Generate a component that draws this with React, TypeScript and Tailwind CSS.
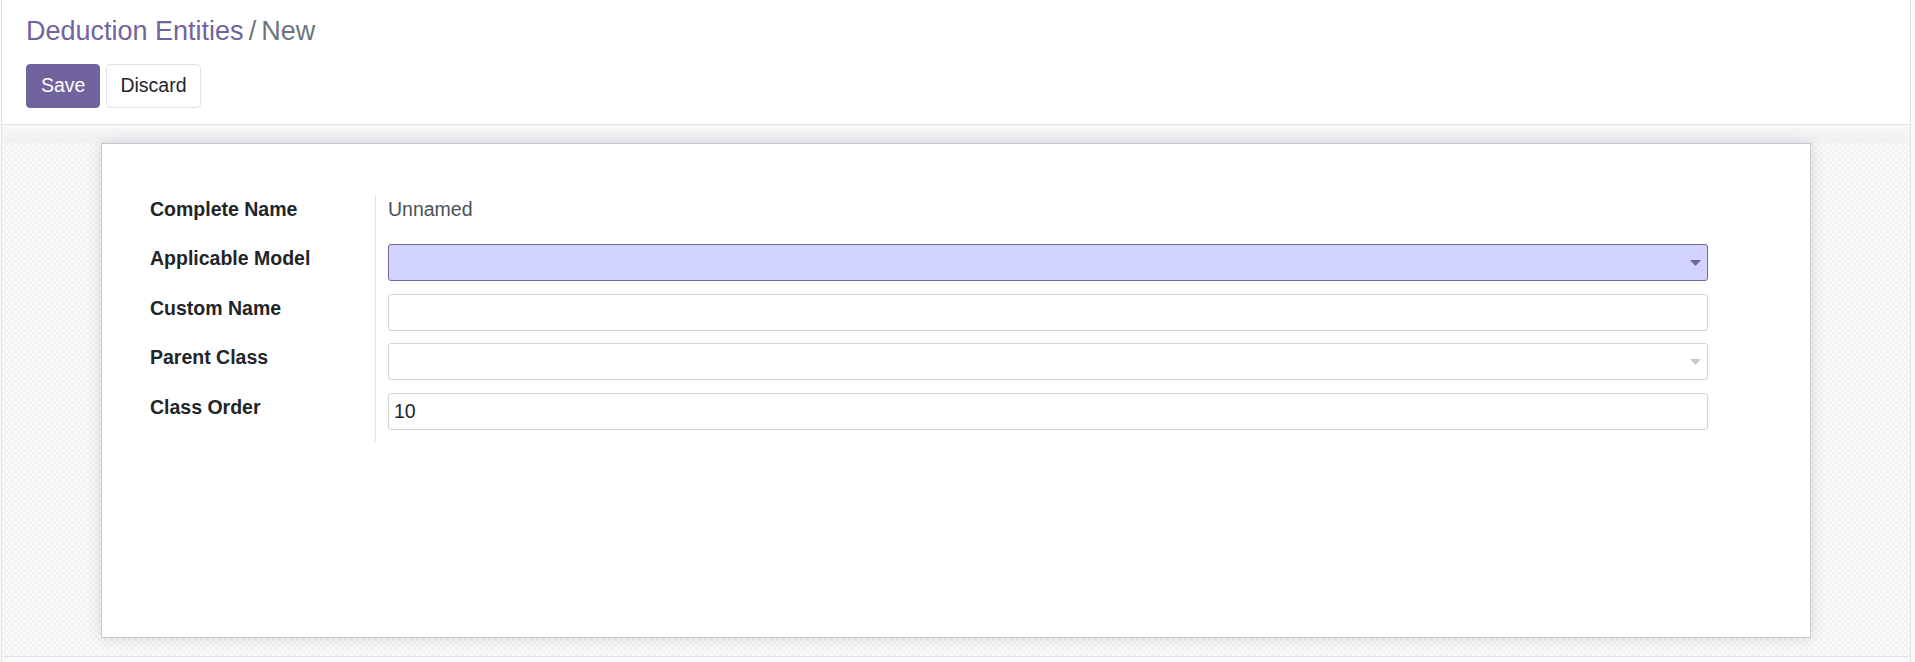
import React from 'react';

type Field = {
  label: string;
  kind: 'text' | 'input' | 'select';
  value?: string;
  required?: boolean;
  height: string;
};

const fields: Field[] = [
  { label: 'Complete Name', kind: 'text', value: 'Unnamed', height: 'h-[49px]' },
  { label: 'Applicable Model', kind: 'select', required: true, height: 'h-[50px]' },
  { label: 'Custom Name', kind: 'input', height: 'h-[49px]' },
  { label: 'Parent Class', kind: 'select', height: 'h-[50px]' },
  { label: 'Class Order', kind: 'input', value: '10', height: 'h-[49px]' },
];

function Caret({ color }: { color: string }) {
  return (
    <svg width="11" height="6" viewBox="0 0 11 6" className="absolute right-[6px] top-[15px]">
      <polygon points="0,0 11,0 5.5,6" fill={color} />
    </svg>
  );
}

function FieldValue({ f }: { f: Field }) {
  if (f.kind === 'text') {
    return <span className="text-[#495057]">{f.value}</span>;
  }
  return (
    <div
      className={
        f.required
          ? 'relative flex h-[37px] w-[1320px] items-center rounded-[3px] border border-[#7467a0] bg-[#d2d2ff] px-[5px]'
          : 'relative flex h-[37px] w-[1320px] items-center rounded-[3px] border border-[#d4d4d4] bg-white px-[5px]'
      }
    >
      <span className="text-[#212529]">{f.value}</span>
      {f.kind === 'select' && <Caret color={f.required ? '#71639e' : '#c9c9c9'} />}
    </div>
  );
}

export default function App() {
  return (
    <div className="h-[662px] w-[1915px] overflow-hidden bg-[#f8f9fa] font-['Liberation_Sans',Arial,sans-serif]">
      <div className="ml-[1px] flex h-full w-[1910px] flex-col border-x border-[#e3e3e3] bg-white">
        {/* control panel */}
        <header className="border-b border-[#dee2e6] bg-white px-[24px] pb-[16px] pt-[13px]">
          <h1 className="flex text-[27px] leading-[36px]">
            <span className="text-[#71639e]">Deduction Entities</span>
            <span className="mx-[5px] text-[#6c757d]">/</span>
            <span className="text-[#6c757d]">New</span>
          </h1>
          <div className="mt-[15px] flex gap-[6px]">
            <button className="flex h-[44px] items-center rounded-[4px] border border-[#71639e] bg-[#71639e] px-[14px] text-[19.5px] text-white">
              Save
            </button>
            <button className="flex h-[44px] items-center rounded-[4px] border border-[#dee2e6] bg-white px-[13px] text-[19.5px] text-[#212529]">
              Discard
            </button>
          </div>
        </header>

        {/* empty status bar */}
        <div className="h-[18px] bg-linear-to-b from-[#f7f8f9] to-[#eff0f2]" />

        {/* sheet background */}
        <div className="h-[513px] bg-[repeating-conic-gradient(#f1f1f1_0_25%,#fbfbfb_0_50%)] bg-[length:6px_6px]">
          <div className="mx-auto h-[495px] w-[1710px] border border-[#c8c9d0] bg-white pl-[48px] pt-[51px] shadow-[0_0_14px_rgba(0,0,0,0.13)]">
            <div className="text-[19.5px] leading-[29px]">
              {fields.map((f) => (
                <div key={f.label} className={`grid grid-cols-[225px_1333px] ${f.height}`}>
                  <div className="font-bold text-[#212529]">{f.label}</div>
                  <div className="border-l border-[#dee2e6] pl-[12px]">
                    <FieldValue f={f} />
                  </div>
                </div>
              ))}
            </div>
          </div>
        </div>

        <div className="flex-1 border-t border-[#dee2e6] bg-[#f8f9fa]" />
      </div>
    </div>
  );
}
